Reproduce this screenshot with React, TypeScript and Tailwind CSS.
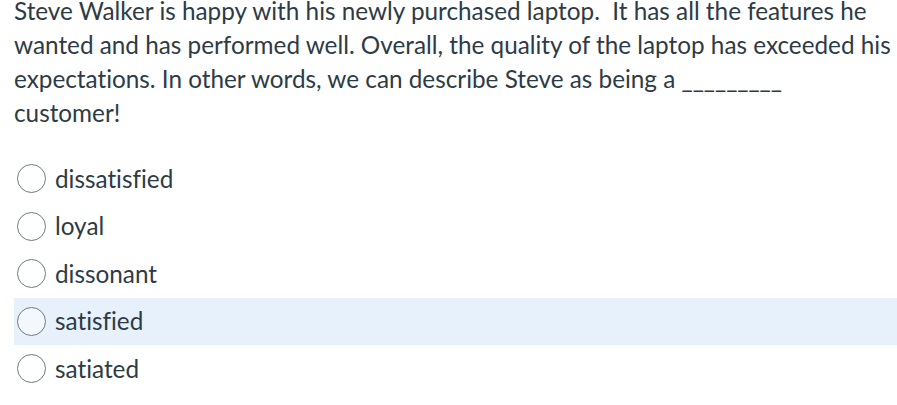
import React from "react";

const options = ["dissatisfied", "loyal", "dissonant", "satisfied", "satiated"];

export default function App() {
  return (
    <div
      className="w-[897px] h-[405px] bg-white text-[#2d3b45] overflow-hidden [font-variant-ligatures:none]"
      style={{ fontFamily: "Lato, 'Open Sans', sans-serif" }}
    >
      <p className="pl-[14px] pr-[3px] text-[24.3px] leading-[34px] -mt-[6px]">
        Steve Walker is happy with his newly purchased laptop.&nbsp; It has all the features he wanted and has
        performed well. Overall, the quality of the laptop has exceeded his expectations. In other words, we can
        describe Steve as being a _________
        <br />
        customer!
      </p>
      <div className="mt-[25px] flex flex-col">
        {options.map((o, i) => (
          <div
            key={o}
            className={`ml-[14px] h-[47.5px] flex items-center gap-[9px] pl-[3px] ${i === 3 ? "bg-[#e6f1fb]" : ""}`}
          >
            <span
              className={`w-[29px] h-[29px] rounded-full border border-[#6f7a82] shrink-0 ${i === 3 ? "bg-[#f4f8fc]" : "bg-white"}`}
            />
            <span className="text-[24.3px] leading-[30px]">{o}</span>
          </div>
        ))}
      </div>
    </div>
  );
}
